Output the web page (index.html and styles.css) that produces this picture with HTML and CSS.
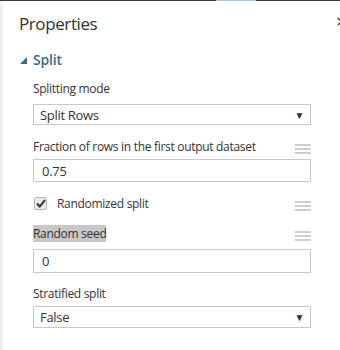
FILE: index.html
```html
<!DOCTYPE html>
<html lang="en">
<head>
  <meta charset="UTF-8" />
  <title>Properties</title>
  <link rel="stylesheet" href="styles.css">
</head>
<body>
  <div class="topline"><span class="tab-mark"></span></div>

  <div class="panel">
    <span class="close">×</span>
    <h1 class="title">Properties</h1>

    <div class="section">
      <div class="section-head">
        <span class="caret"></span>
        <span class="section-name">Split</span>
      </div>

      <div class="fields">
        <div class="field first">
          <div class="label-row"><span class="label">Splitting mode</span></div>
          <div class="select">
            <span>Split Rows</span>
            <span class="arrow">▼</span>
          </div>
        </div>

        <div class="field">
          <div class="label-row">
            <span class="label">Fraction of rows in the first output dataset</span>
            <span class="grip"><i></i><i></i><i></i></span>
          </div>
          <div class="input">0.75</div>
        </div>

        <div class="field">
          <div class="label-row">
            <span class="checkbox">
              <svg width="10" height="9" viewBox="0 0 10 9"><path d="M1 4.5 L3.8 7.5 L9 1.2" fill="none" stroke="#333" stroke-width="2"/></svg>
            </span>
            <span class="label check-label">Randomized split</span>
            <span class="grip"><i></i><i></i><i></i></span>
          </div>
        </div>

        <div class="field">
          <div class="label-row">
            <span class="label selected">Random seed</span>
            <span class="grip"><i></i><i></i><i></i></span>
          </div>
          <div class="input seed">0</div>
        </div>

        <div class="field last">
          <div class="label-row"><span class="label">Stratified split</span></div>
          <div class="select">
            <span>False</span>
            <span class="arrow">▼</span>
          </div>
        </div>
      </div>
    </div>
  </div>
</body>
</html>
```

FILE: styles.css
```css
* {
  margin: 0;
  padding: 0;
  box-sizing: border-box;
}

body {
  font-family: 'Open Sans', sans-serif;
  background: #ffffff;
  color: #333333;
  width: 340px;
  height: 350px;
  overflow: hidden;
}

.topline {
  height: 1px;
  background: #3a3a3a;
  display: flex;
}

.tab-mark {
  margin-left: 216px;
  width: 40px;
  background: #a9cbe6;
}

.panel {
  position: relative;
  height: 349px;
  border-left: 3px solid #f0f0f0;
  padding: 11px 0 0 16px;
}

.close {
  position: absolute;
  top: 7px;
  left: 333px;
  font-size: 19px;
  color: #333;
}

.title {
  font-size: 17px;
  font-weight: 400;
  letter-spacing: -0.4px;
  line-height: 24px;
  color: #333;
}

.section-head {
  display: flex;
  align-items: center;
  margin-top: 13px;
  height: 20px;
}

.caret {
  width: 0;
  height: 0;
  border-left: 7px solid transparent;
  border-bottom: 7px solid #3c6a8c;
  margin: 2px 6px 0 1px;
}

.section-name {
  font-size: 14px;
  font-weight: 600;
  letter-spacing: -0.2px;
  color: #3c6a8c;
}

.fields {
  padding-left: 14px;
  width: 292px;
}

.field {
  margin-top: 12px;
}

.field.first {
  margin-top: 10px;
}

.field.last {
  margin-top: 11px;
}

.label-row {
  display: flex;
  align-items: center;
  height: 18px;
}

.label {
  font-size: 12px;
  letter-spacing: -0.3px;
  color: #333;
}

.label.selected {
  background: #c8c8c8;
}

.grip {
  margin-left: auto;
  width: 16px;
  display: flex;
  flex-direction: column;
  gap: 2px;
  margin-top: 6px;
}

.grip i {
  display: block;
  height: 2px;
  background: #cfcfcf;
}

.select,
.input {
  margin-top: 4px;
  height: 22px;
  border: 1px solid #c8c8c8;
  display: flex;
  align-items: center;
  font-size: 13px;
  letter-spacing: -0.3px;
}

.field.first .select {
  margin-top: 7px;
  height: 21px;
}

.select {
  padding: 0 6px;
  justify-content: space-between;
}

.input {
  padding: 0 8px;
  height: 23px;
}

.input.seed {
  margin-top: 7px;
  height: 24px;
}

.arrow {
  font-size: 10px;
}

.checkbox {
  width: 13px;
  height: 13px;
  border: 1px solid #b5b5b5;
  border-radius: 2px;
  background: #eaeaea;
  display: flex;
  align-items: center;
  justify-content: center;
  margin-left: 1px;
}

.check-label {
  margin-left: 10px;
}
```
